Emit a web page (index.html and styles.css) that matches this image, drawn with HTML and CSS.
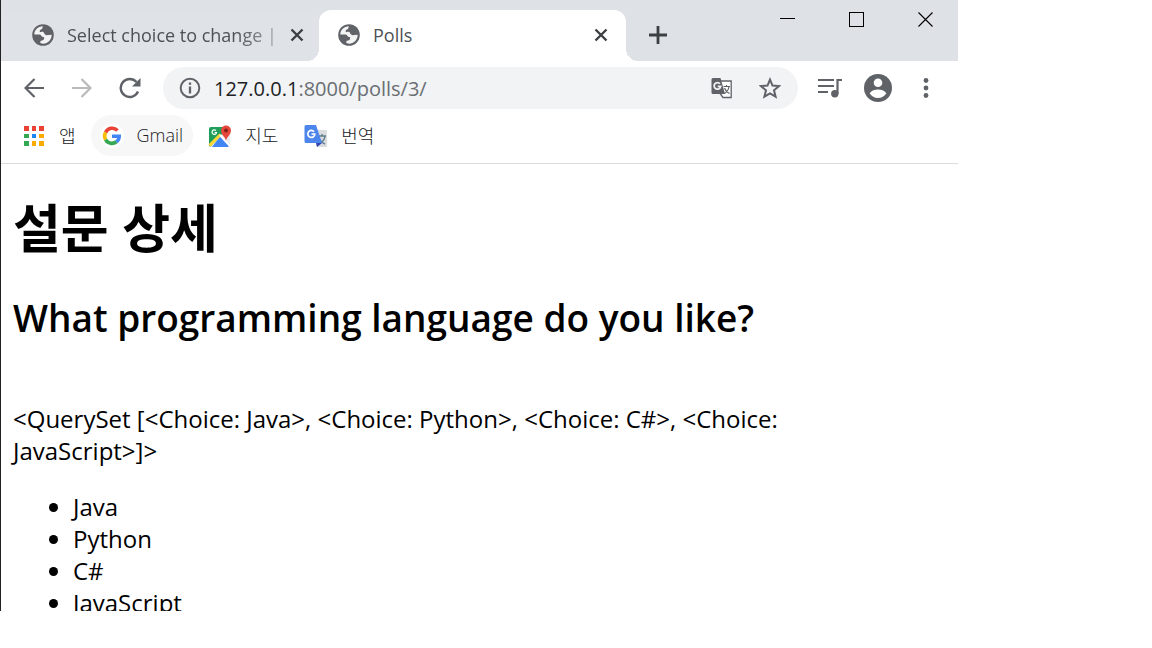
FILE: index.html
```html
<!DOCTYPE html>
<html lang="ko">
<head>
<meta charset="utf-8">
<title>Polls</title>
<link rel="stylesheet" href="styles.css">
</head>
<body>
<svg class="defs" width="0" height="0" aria-hidden="true">
  <symbol id="globe" viewBox="0 0 22 22">
    <circle cx="11" cy="11" r="10.800" fill="#5f6368"/>
    <path fill="#fff" fill-opacity=".92" d="M2.300 10.500C2.300 6 6 2.500 10.800 2.300c-.3 1.200-.2 2-1 2.700L7.800 6.300v2l2-.5c1-.3 2 .2 2.200 1.200.3 1.300 1.500 1.200 1.800 2.200l5.800-.4c.3 4.500-3.500 8.900-8.600 8.900-1.500 0-2-.2-2.700-.6l.2-2.100 3-1c.8-1.500 1.200-2.600-.2-2.900-2-.3-1.800-2.600-4.300-2.600z"/>
  </symbol>
  <symbol id="cross" viewBox="0 0 14 14">
    <path d="M1.500 1.500l11 11M12.500 1.500l-11 11" fill="none" stroke="#3c4043" stroke-width="2.400"/>
  </symbol>
</svg>
<div class="window">
  <header class="tabstrip">
    <div class="tab tab-idle">
      <svg class="favicon"><use href="#globe"/></svg>
      <span class="tab-title faded">Select choice to change |</span>
      <button class="close" aria-label="Close tab"><svg width="14" height="14"><use href="#cross"/></svg></button>
    </div>
    <div class="tab tab-active">
      <svg class="favicon"><use href="#globe"/></svg>
      <span class="tab-title">Polls</span>
      <button class="close" aria-label="Close tab"><svg width="14" height="14"><use href="#cross"/></svg></button>
    </div>
    <button class="new-tab" aria-label="New tab"><svg width="18" height="18" viewBox="0 0 18 18"><path d="M9 0v18M0 9h18" stroke="#3c4043" stroke-width="2.800"/></svg></button>
    <div class="controls">
      <button aria-label="Minimize"><svg width="15" height="15" shape-rendering="crispEdges"><path d="M0 6.500h15" stroke="#000"/></svg></button>
      <button aria-label="Maximize"><svg width="15" height="15" shape-rendering="crispEdges"><path d="M.5.5h14v14H.5z" fill="none" stroke="#000"/></svg></button>
      <button aria-label="Close"><svg width="15" height="15"><path d="M.5.5l14 14M14.500.5l-14 14" stroke="#000" stroke-width="1.100"/></svg></button>
    </div>
  </header>
  <nav class="toolbar" aria-label="Navigation">
    <button aria-label="Back"><svg width="20" height="20" viewBox="0 0 20 20" fill="none" stroke="#5f6368" stroke-width="2.200"><path d="M20 10H2M10.500 1L1.500 10l9 9"/></svg></button>
    <button aria-label="Forward"><svg width="20" height="20" viewBox="0 0 20 20" fill="none" stroke="#bababc" stroke-width="2.200"><path d="M0 10h18M9.500 1l9 9-9 9"/></svg></button>
    <button aria-label="Reload"><svg width="22" height="22" viewBox="0 0 22 22"><path d="M19 14.500A9 9 0 1 1 17.500 5" fill="none" stroke="#5f6368" stroke-width="2.400"/><path d="M21.500 1v8.500H13z" fill="#5f6368"/></svg></button>
    <div class="address">
      <svg width="22" height="22" viewBox="0 0 22 22"><circle cx="11" cy="11" r="9.300" fill="none" stroke="#5f6368" stroke-width="2"/><path d="M11 5.500v2.300M11 9.500v7" stroke="#5f6368" stroke-width="2.300"/></svg>
      <span class="url"><span class="host">127.0.0.1</span>:8000/polls/3/</span>
      <button aria-label="Translate"><svg width="22" height="22" viewBox="0 0 22 22"><path d="M9 4h11.200v16.500H12L8 15" fill="#fff" stroke="#5f6368" stroke-width="1.300"/><path d="M2 1h7.500l4.500 16H2a1.500 1.500 0 0 1-1.500-1.500v-13A1.500 1.500 0 0 1 2 1z" fill="#5f6368"/><path d="M9 6.800A3.300 3.300 0 1 0 9.700 9.300H6.700" fill="none" stroke="#f1f3f4" stroke-width="1.800"/><path d="M12.500 9.500h6.500M15.500 8v1.500M13.500 11c1 3 3 4.500 5 5.500M18 9.500c-.5 3-2 5.500-4.500 7" fill="none" stroke="#5f6368" stroke-width="1.200"/></svg></button>
      <button aria-label="Bookmark"><svg width="22" height="22" viewBox="0 0 22 22"><path d="M11 2.600l2.500 6 6.500.5-5 4.200 1.600 6.400-5.600-3.400-5.600 3.400L7 13.300 2 9.100l6.500-.5z" fill="none" stroke="#5f6368" stroke-width="2"/></svg></button>
    </div>
    <button aria-label="Media"><svg width="24" height="20" viewBox="0 0 24 20"><path d="M0 2h16M0 8h16M0 14h10" stroke="#5f6368" stroke-width="2.100"/><path d="M24 2h-4.500v14" fill="none" stroke="#5f6368" stroke-width="2.200"/><circle cx="16.800" cy="15.800" r="3.700" fill="#5f6368"/></svg></button>
    <button aria-label="Profile"><svg width="28" height="28" viewBox="0 0 28 28"><circle cx="14" cy="14" r="14" fill="#5f6368"/><circle cx="14" cy="8.800" r="4.300" fill="#fff"/><path d="M5.600 19.300C7.500 16.500 11 15.600 14 15.600s6.500.9 8.400 3.700C20.500 22.300 17.500 24 14 24s-6.500-1.700-8.400-4.700z" fill="#fff"/></svg></button>
    <button aria-label="Menu"><svg width="6" height="20" viewBox="0 0 6 20" fill="#5f6368"><circle cx="3" cy="2.500" r="2.400"/><circle cx="3" cy="10" r="2.400"/><circle cx="3" cy="17.500" r="2.400"/></svg></button>
  </nav>
  <nav class="bookmarks" aria-label="Bookmarks">
    <a href="#"><svg width="24" height="24" viewBox="-2 -2 24 24" shape-rendering="crispEdges"><path fill="#ea4335" d="M0 0h5v5H0zM8 0h4v5H8zM15 0h5v5h-5z"/><path fill="#34a853" d="M0 8h5v4H0zM0 15h5v5H0z"/><path fill="#1a87f0" d="M8 8h4v4H8z"/><path fill="#f9ab00" d="M15 8h5v4h-5zM8 15h4v5H8zM15 15h5v5h-5z"/></svg><span>앱</span></a>
    <a href="#" class="hovered"><svg width="24" height="24" viewBox="0 0 24 24"><circle cx="12" cy="12" r="12" fill="#fff"/><g fill="none" stroke-width="3.600"><path d="M17.500 6.500A7.300 7.300 0 0 0 5.600 8.400" stroke="#ea4335"/><path d="M5.600 8.400a7.300 7.300 0 0 0 0 7.200" stroke="#fbbc05"/><path d="M5.600 15.600a7.300 7.300 0 0 0 10.800 2.200" stroke="#34a853"/><path d="M16.400 17.800A7 7 0 0 0 19.200 12.200H12" stroke="#4285f4"/></g></svg><span>Gmail</span></a>
    <a href="#"><svg width="24" height="24" viewBox="0 0 24 24"><path d="M3 3h17v20H3a2 2 0 0 1-2-2V5a2 2 0 0 1 2-2z" fill="#1e9e58"/><path d="M2 23L17 7l5 3v13z" fill="#e8eaed"/><path d="M12 12.500l9 9.500-1 1H4z" fill="#4285f4"/><path d="M1.500 21.500L12.500 10.500" stroke="#fdd835" stroke-width="3"/><path d="M12 11l10 11" stroke="#fff" stroke-width="2"/><path d="M8 6.500a2.300 2.300 0 1 0 .6 2H6.500" fill="none" stroke="#fff" stroke-width="1.200"/><path d="M18 17c-.4-4-5-6-5-10.500a5 5 0 0 1 10 0c0 4.500-4.600 6.500-5 10.500z" fill="#e5473b"/><circle cx="18" cy="6.500" r="1.900" fill="#7c1d16"/></svg><span>지도</span></a>
    <a href="#"><svg width="24" height="24" viewBox="0 0 24 24"><path d="M9 6h13a1 1 0 0 1 1 1v15a1 1 0 0 1-1 1h-9z" fill="#dadce0"/><path d="M14 12h8M18 10v2M15 14c1 3 3 4.500 6 6M21 12c-.5 4-3 6.500-6 8" fill="none" stroke="#607d8b" stroke-width="1.400"/><path d="M12 19h6l-5 4z" fill="#3043b0"/><path d="M2 1h10l6 18H2a1.500 1.500 0 0 1-1.500-1.500v-15A1.500 1.500 0 0 1 2 1z" fill="#4c86ec"/><path d="M10 7.700A3.500 3.500 0 1 0 10.800 10H7.500" fill="none" stroke="#fff" stroke-width="1.700"/></svg><span>번역</span></a>
  </nav>
  <main class="page">
    <h1>설문 상세</h1>
    <h2>What programming language do you like?</h2>
    <p>&lt;QuerySet [&lt;Choice: Java&gt;, &lt;Choice: Python&gt;, &lt;Choice: C#&gt;, &lt;Choice:<br>JavaScript&gt;]&gt;</p>
    <ul>
      <li>Java</li>
      <li>Python</li>
      <li>C#</li>
      <li>JavaScript</li>
    </ul>
  </main>
</div>
</body>
</html>
```
FILE: styles.css
```css
* { box-sizing: border-box; }
body {
  margin: 0;
  height: 100vh;
  padding: 0 194px 37px 0;
  background: #fff;
  font-family: "Open Sans", "Noto Sans CJK KR", sans-serif;
  color: #000;
}
.defs { display: none; }
button {
  border: 0;
  padding: 0;
  background: none;
  display: flex;
  align-items: center;
  justify-content: center;
  flex: none;
}
svg { flex: none; display: block; }
.window {
  height: 100%;
  overflow: hidden;
  border-left: 1px solid #222;
  display: flex;
  flex-direction: column;
}
.tabstrip {
  flex: none;
  height: 61px;
  padding-top: 10px;
  display: flex;
  background: #dee1e6;
}
.tab {
  display: flex;
  align-items: center;
  flex: 0 1 307px;
  min-width: 0;
  padding: 0 18px 2px 19px;
  gap: 13px;
  font-size: 18px;
  color: #4d5156;
}
.tab-idle {
  flex-basis: 318px;
  padding: 0 15px 2px 31px;
  background: #dfe2e7;
}
.tab-active {
  position: relative;
  background: #fff;
  border-radius: 12px 12px 0 0;
}
.tab-active::before,
.tab-active::after {
  content: "";
  position: absolute;
  bottom: 0;
  width: 12px;
  height: 12px;
}
.tab-active::before {
  right: 100%;
  background: radial-gradient(circle at 0 0, transparent 12px, #fff 12px);
}
.tab-active::after {
  left: 100%;
  background: radial-gradient(circle at 100% 0, transparent 12px, #fff 12px);
}
.favicon { width: 22px; height: 22px; }
.tab-title {
  flex: 1;
  min-width: 0;
  overflow: hidden;
  white-space: nowrap;
}
.faded {
  -webkit-mask-image: linear-gradient(to right, #000 80%, rgba(0, 0, 0, .4));
  mask-image: linear-gradient(to right, #000 80%, rgba(0, 0, 0, .4));
}
.close { width: 14px; height: 24px; }
.new-tab { width: 40px; margin-left: 12px; padding-bottom: 2px; }
.controls {
  margin-left: auto;
  margin-right: -2px;
  height: 18px;
  display: flex;
}
.controls button { width: 69px; }
.toolbar {
  flex: none;
  display: flex;
  align-items: center;
  height: 54px;
  padding: 0 8px 0 9px;
}
.toolbar > button { width: 48px; height: 48px; }
.address {
  flex: 1;
  min-width: 0;
  display: flex;
  align-items: center;
  height: 42px;
  margin: 0 8px 0 9px;
  padding: 0 4px 0 16px;
  border-radius: 21px;
  background: #f1f3f4;
}
.url {
  flex: 1;
  min-width: 0;
  margin-left: 13px;
  font-size: 20px;
  color: #6a6e73;
}
.host { color: #202124; }
.address button { width: 48px; height: 42px; }
.bookmarks {
  flex: none;
  display: flex;
  gap: 4px;
  height: 49px;
  padding: 0 10px 7px;
  border-bottom: 1px solid #dadce0;
}
.bookmarks a {
  display: flex;
  align-items: center;
  gap: 13px;
  padding: 0 11px;
  border-radius: 21px;
  font-size: 18px;
  font-weight: 300;
  color: #202124;
  text-decoration: none;
}
.bookmarks span { padding-bottom: 2px; }
.bookmarks .hovered { background: #f7f7f7; padding: 0 10px 0 9px; }
.page {
  flex: 1;
  min-height: 0;
  overflow: hidden;
  padding: 32px 12px 0;
  font-size: 24px;
  line-height: 32px;
}
h1 {
  margin: 0;
  font-size: 52px;
  line-height: 64px;
  font-weight: 700;
}
h2 {
  margin: 34px 0 61px;
  font-size: 37px;
  line-height: 48px;
  font-weight: 600;
}
p { margin: 0; }
ul { margin: 24px 0; padding-left: 60px; }
```
